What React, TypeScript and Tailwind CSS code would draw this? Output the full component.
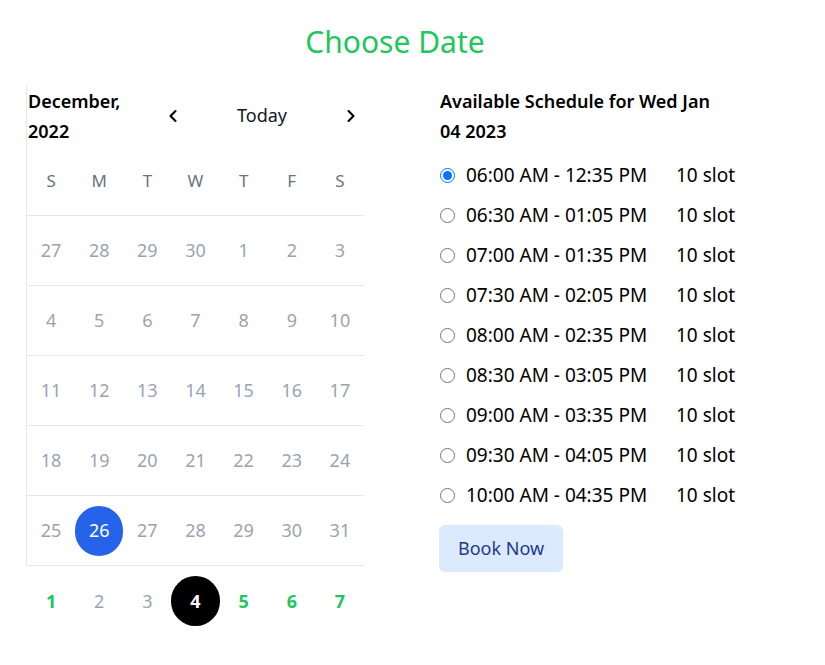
import { ChevronLeft, ChevronRight } from "lucide-react";

const weekDays = ["S", "M", "T", "W", "T", "F", "S"];

const decRows = [
  [27, 28, 29, 30, 1, 2, 3],
  [4, 5, 6, 7, 8, 9, 10],
  [11, 12, 13, 14, 15, 16, 17],
  [18, 19, 20, 21, 22, 23, 24],
  [25, 26, 27, 28, 29, 30, 31],
];

const janRow = [
  { d: 1, kind: "open" },
  { d: 2, kind: "off" },
  { d: 3, kind: "off" },
  { d: 4, kind: "picked" },
  { d: 5, kind: "open" },
  { d: 6, kind: "open" },
  { d: 7, kind: "open" },
];

const slots = [
  "06:00 AM - 12:35 PM",
  "06:30 AM - 01:05 PM",
  "07:00 AM - 01:35 PM",
  "07:30 AM - 02:05 PM",
  "08:00 AM - 02:35 PM",
  "08:30 AM - 03:05 PM",
  "09:00 AM - 03:35 PM",
  "09:30 AM - 04:05 PM",
  "10:00 AM - 04:35 PM",
];

function Calendar() {
  return (
    <div className="w-[338px] shrink-0">
      <div className="border-l border-[#e5e7eb]">
        {/* Month header */}
        <div className="flex h-[60px] items-start">
          <div className="w-[136px] pl-[1px] text-[18px] font-semibold leading-[30px] text-black">
            December,
            <br />
            2022
          </div>
          <div className="flex flex-1 items-center justify-between pt-[16px] pr-[3px]">
            <ChevronLeft className="h-5 w-5 text-black" strokeWidth={2.5} />
            <span className="text-[18px] text-gray-900">Today</span>
            <ChevronRight className="h-5 w-5 text-black" strokeWidth={2.5} />
          </div>
        </div>

        {/* Week days */}
        <div className="grid h-[70px] grid-cols-7 items-center border-b border-[#e5e7eb]">
          {weekDays.map((w, i) => (
            <div key={i} className="text-center text-[17px] text-[#6b7280]">
              {w}
            </div>
          ))}
        </div>

        {decRows.map((row, r) => (
          <div
            key={r}
            className="grid h-[70px] grid-cols-7 items-center border-b border-[#e5e7eb]"
          >
            {row.map((d, i) => (
              <div key={i} className="flex justify-center">
                {r === 4 && d === 26 ? (
                  <span className="flex h-[50px] w-[50px] items-center justify-center rounded-full bg-[#2563eb] text-[18px] text-white">
                    {d}
                  </span>
                ) : (
                  <span className="text-[18px] text-[#9ca3af]">{d}</span>
                )}
              </div>
            ))}
          </div>
        ))}
      </div>

      {/* Next month row */}
      <div className="grid h-[70px] grid-cols-7 items-center pl-px">
        {janRow.map((c) => (
          <div key={c.d} className="flex justify-center">
            {c.kind === "picked" ? (
              <span className="flex h-[50px] w-[50px] items-center justify-center rounded-full bg-black text-[18px] font-bold text-white">
                {c.d}
              </span>
            ) : c.kind === "open" ? (
              <span className="text-[18px] font-bold text-[#22c55e]">{c.d}</span>
            ) : (
              <span className="text-[18px] text-[#9ca3af]">{c.d}</span>
            )}
          </div>
        ))}
      </div>
    </div>
  );
}

function Schedule() {
  return (
    <div className="w-[300px] shrink-0">
      <h3 className="w-[290px] text-[18px] font-semibold leading-[30px] text-black">
        Available Schedule for Wed Jan 04 2023
      </h3>
      <div className="mt-[9px] flex flex-col">
        {slots.map((s, i) => (
          <label key={s} className="flex h-[40px] items-center">
            <input
              type="radio"
              name="slot"
              defaultChecked={i === 0}
              className="m-0 h-[15px] w-[15px]"
            />
            <span className="ml-[11px] w-[210px] text-[19px] text-black">{s}</span>
            <span className="text-[19px] text-black">10 slot</span>
          </label>
        ))}
      </div>
      <button className="mt-[10px] -ml-px h-[47px] rounded-md bg-[#dbeafe] px-[19px] text-[18px] text-[#1e3a8a]">
        Book Now
      </button>
    </div>
  );
}

export default function App() {
  return (
    <div
      className="min-h-screen bg-white"
      style={{ fontFamily: '"Segoe UI", "Noto Sans", sans-serif' }}
    >
      <h1 className="pt-[22px] pb-[24px] text-center text-[30px] font-normal leading-[40px] text-[#22c55e]">
        <span className="pr-[35px]">Choose Date</span>
      </h1>
      <div className="flex gap-[76px] pl-[26px]">
        <Calendar />
        <Schedule />
      </div>
    </div>
  );
}
